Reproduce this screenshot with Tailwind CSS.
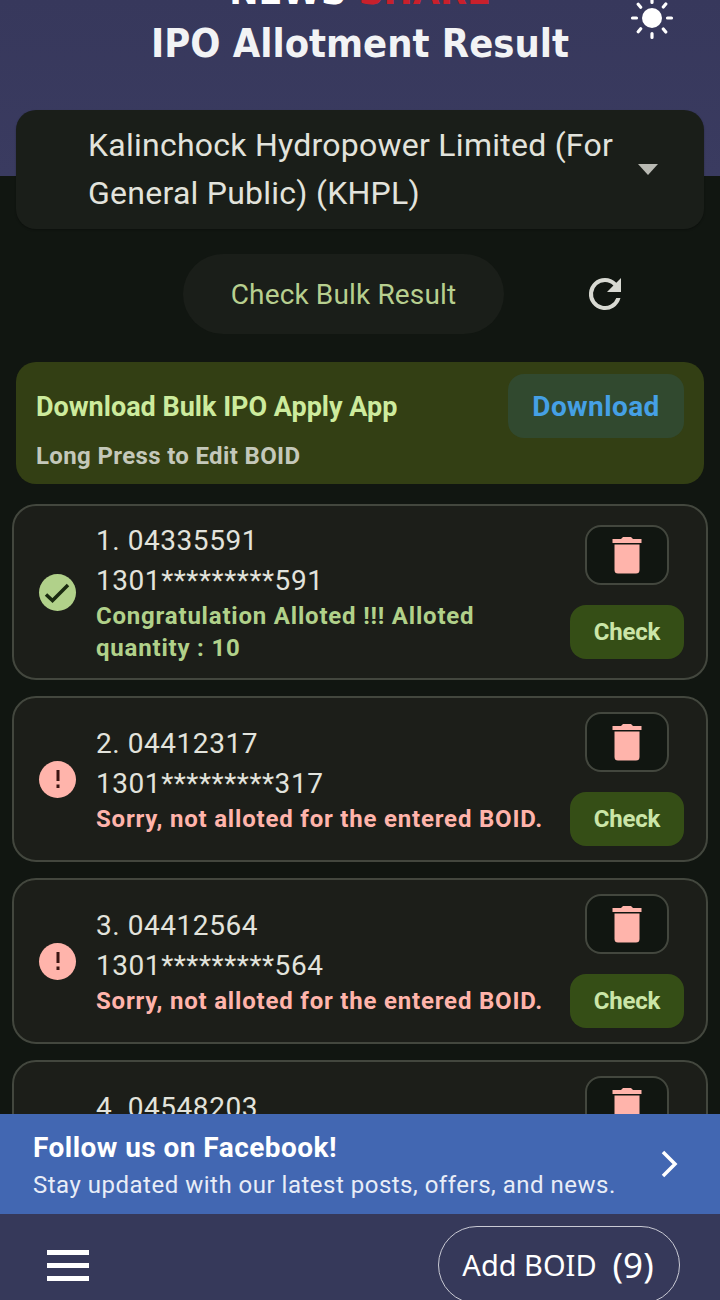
<!DOCTYPE html>
<html lang="en">

<head>
    <meta charset="UTF-8">
    <meta name="viewport" content="width=device-width, initial-scale=1.0">
    <title>IPO Allotment Result</title>
    <script src="https://cdn.jsdelivr.net/npm/@tailwindcss/browser@4"></script>
</head>

<body class="bg-[#111611]">
    <div class="relative w-[720px] h-[1300px] overflow-hidden flex flex-col bg-[#111611] font-['Roboto',sans-serif] text-[#e2e3dc]">

        <!-- scrolling part -->
        <div class="h-[1114px] overflow-hidden shrink-0">
            <div class="relative h-[176px] bg-gradient-to-b from-[#37385c] to-[#3a3b60]">
                <div class="h-[6px] overflow-hidden flex justify-center">
                    <div class="-mt-[20px] h-[25px] leading-[25px] text-[35px] font-bold font-['DejaVu_Sans',sans-serif] whitespace-nowrap"><span class="text-white">NEWS</span> <span class="text-[#c8202c]">SHARE</span></div>
                </div>
                <div class="mt-[12px] text-center text-[39.5px] leading-[50px] font-bold text-[#f2f3f5] font-['DejaVu_Sans_Condensed','DejaVu_Sans',sans-serif] [font-stretch:condensed]">IPO Allotment Result</div>
                <!-- sun -->
                <svg class="absolute left-[628px] top-[-6px]" width="48" height="48" viewBox="0 0 48 48" fill="none">
                    <circle cx="24" cy="24" r="10" fill="#fff"/>
                    <g stroke="#fff" stroke-width="3.2" stroke-linecap="round">
                        <path d="M24 4.5v4M24 39.500v4M4.500 24h4M39.500 24h4M10.200 10.200l2.500 3M35.300 35l2.500 3M10.200 37.800l2.500-3M35.300 13l2.500-3"/>
                    </g>
                </svg>
            </div>

            <div class="px-4 -mt-[66px] relative">
                <div class="h-[119px] rounded-[20px] bg-[#1a1e19] shadow-[0_1px_2px_rgba(0,0,0,0.3)] flex items-center pl-[72px] pr-[46px]">
                    <div class="flex-1 pb-[2px] text-[32px] leading-[48px] text-[#e2e3dc] tracking-[0.25px]">Kalinchock Hydropower Limited (For General Public) (KHPL)</div>
                    <div class="w-0 h-0 ml-2 border-l-[10px] border-r-[10px] border-t-[11px] border-l-transparent border-r-transparent border-t-[#b9bab3]"></div>
                </div>
            </div>

            <div class="flex mt-[25px] pl-[183px] items-center">
                <div class="w-[321px] h-[80px] pt-[2px] rounded-full bg-[#1a1e19] flex items-center justify-center text-[28px] text-[#b7cf8f] tracking-[0.15px]">Check Bulk Result</div>
                <svg class="ml-[77px]" width="48" height="48" viewBox="0 0 24 24" fill="#d8d9d2">
                    <path d="M17.650 6.350A7.960 7.960 0 0 0 12 4a8 8 0 1 0 7.730 10h-2.080A6 6 0 1 1 12 6c1.660 0 3.140.69 4.220 1.780L13 11h7V4z"/>
                </svg>
            </div>

            <div class="mx-4 mt-[28px] h-[122px] rounded-[20px] bg-[#333f14] flex pl-[20px] pr-[20px]">
                <div class="flex-1">
                    <div class="mt-[27px] text-[27px] leading-[36px] font-bold text-[#cdeb9d]">Download Bulk IPO Apply App</div>
                    <div class="mt-[13px] text-[24px] leading-[36px] font-bold text-[#c4c8ba] tracking-[0.35px]">Long Press to Edit BOID</div>
                </div>
                <div class="mt-[12px] w-[176px] h-[64px] pt-[1px] rounded-[16px] bg-[#31492f] flex items-center justify-center text-[28px] font-bold text-[#45a0e5] tracking-[0.4px]">Download</div>
            </div>

            <div class="mt-[20px] mx-3 flex flex-col gap-4">
                <!-- 1 -->
                <div class="h-[176px] rounded-[24px] border-2 border-[#43473e] bg-[#1c1e19] flex items-center pl-[25px] pr-[22px]">
                    <div class="w-[37px] h-[37px] rounded-full bg-[#b1d18a] shrink-0">
                        <svg width="37" height="37" viewBox="0 0 37 37" fill="none" stroke="#1a2a10" stroke-width="3.500"><path d="M7 20.500l6.500 6L29 11"/></svg>
                    </div>
                    <div class="flex-1 ml-[20px] w-0 pt-[1px]">
                        <div class="text-[28px] leading-[40px] tracking-[0.55px]">1. 04335591</div>
                        <div class="text-[28px] leading-[40px] tracking-[0.55px]">1301*********591</div>
                        <div class="-mt-[1px] text-[24px] leading-[32px] font-bold text-[#b1d18a] tracking-[0.8px] w-[420px]">Congratulation Alloted !!! Alloted quantity : 10</div>
                    </div>
                    <div class="flex flex-col items-center gap-[20px] w-[114px] shrink-0">
                        <div class="w-[84px] h-[60px] rounded-[16px] border-2 border-[#43473e] bg-[#111611] flex items-center justify-center">
                            <svg width="30" height="38" viewBox="0 0 30 38" fill="#ffb4ab"><path d="M0.500 7V3H9l2-2h8l2 2h8.500v4zM2.500 8.500h25V34a3.500 3.500 0 0 1-3.500 3.500H6A3.500 3.500 0 0 1 2.500 34z"/></svg>
                        </div>
                        <div class="w-[114px] h-[54px] rounded-[16px] bg-[#354e16] flex items-center justify-center text-[24px] font-bold text-[#cbe5a8] tracking-[-0.2px]">Check</div>
                    </div>
                </div>
                <!-- 2 -->
                <div class="h-[166px] rounded-[24px] border-2 border-[#43473e] bg-[#1c1e19] flex items-center pl-[25px] pr-[22px]">
                    <div class="w-[37px] h-[37px] rounded-full bg-[#ffb4ab] flex items-center justify-center shrink-0">
                        <svg width="8" height="24" viewBox="0 0 8 24" fill="#3a1512"><path d="M2.500 3h3v11h-3zM2.500 17.500h3v3.500h-3z"/></svg>
                    </div>
                    <div class="flex-1 ml-[20px] w-0 pt-[1px]">
                        <div class="text-[28px] leading-[40px] tracking-[0.55px]">2. 04412317</div>
                        <div class="text-[28px] leading-[40px] tracking-[0.55px]">1301*********317</div>
                        <div class="-mt-[1px] text-[24px] leading-[32px] font-bold text-[#ffb4ab] tracking-[0.8px] whitespace-nowrap">Sorry, not alloted for the entered BOID.</div>
                    </div>
                    <div class="flex flex-col items-center gap-[20px] w-[114px] shrink-0">
                        <div class="w-[84px] h-[60px] rounded-[16px] border-2 border-[#43473e] bg-[#111611] flex items-center justify-center">
                            <svg width="30" height="38" viewBox="0 0 30 38" fill="#ffb4ab"><path d="M0.500 7V3H9l2-2h8l2 2h8.500v4zM2.500 8.500h25V34a3.500 3.500 0 0 1-3.500 3.500H6A3.500 3.500 0 0 1 2.500 34z"/></svg>
                        </div>
                        <div class="w-[114px] h-[54px] rounded-[16px] bg-[#354e16] flex items-center justify-center text-[24px] font-bold text-[#cbe5a8] tracking-[-0.2px]">Check</div>
                    </div>
                </div>
                <!-- 3 -->
                <div class="h-[166px] rounded-[24px] border-2 border-[#43473e] bg-[#1c1e19] flex items-center pl-[25px] pr-[22px]">
                    <div class="w-[37px] h-[37px] rounded-full bg-[#ffb4ab] flex items-center justify-center shrink-0">
                        <svg width="8" height="24" viewBox="0 0 8 24" fill="#3a1512"><path d="M2.500 3h3v11h-3zM2.500 17.500h3v3.500h-3z"/></svg>
                    </div>
                    <div class="flex-1 ml-[20px] w-0 pt-[1px]">
                        <div class="text-[28px] leading-[40px] tracking-[0.55px]">3. 04412564</div>
                        <div class="text-[28px] leading-[40px] tracking-[0.55px]">1301*********564</div>
                        <div class="-mt-[1px] text-[24px] leading-[32px] font-bold text-[#ffb4ab] tracking-[0.8px] whitespace-nowrap">Sorry, not alloted for the entered BOID.</div>
                    </div>
                    <div class="flex flex-col items-center gap-[20px] w-[114px] shrink-0">
                        <div class="w-[84px] h-[60px] rounded-[16px] border-2 border-[#43473e] bg-[#111611] flex items-center justify-center">
                            <svg width="30" height="38" viewBox="0 0 30 38" fill="#ffb4ab"><path d="M0.500 7V3H9l2-2h8l2 2h8.500v4zM2.500 8.500h25V34a3.500 3.500 0 0 1-3.500 3.500H6A3.500 3.500 0 0 1 2.500 34z"/></svg>
                        </div>
                        <div class="w-[114px] h-[54px] rounded-[16px] bg-[#354e16] flex items-center justify-center text-[24px] font-bold text-[#cbe5a8] tracking-[-0.2px]">Check</div>
                    </div>
                </div>
                <!-- 4, cut off by the banner -->
                <div class="h-[166px] rounded-[24px] border-2 border-[#43473e] bg-[#1c1e19] flex items-center pl-[25px] pr-[22px]">
                    <div class="w-[37px] shrink-0"></div>
                    <div class="flex-1 ml-[20px] w-0 pt-[1px]">
                        <div class="text-[28px] leading-[40px] tracking-[0.55px]">4. 04548203</div>
                        <div class="text-[28px] leading-[40px] tracking-[0.55px]">1301*********203</div>
                        <div class="-mt-[1px] text-[24px] leading-[32px]">&nbsp;</div>
                    </div>
                    <div class="flex flex-col items-center gap-[20px] w-[114px] shrink-0">
                        <div class="w-[84px] h-[60px] rounded-[16px] border-2 border-[#43473e] bg-[#111611] flex items-center justify-center">
                            <svg width="30" height="38" viewBox="0 0 30 38" fill="#ffb4ab"><path d="M0.500 7V3H9l2-2h8l2 2h8.500v4zM2.500 8.500h25V34a3.500 3.500 0 0 1-3.500 3.500H6A3.500 3.500 0 0 1 2.500 34z"/></svg>
                        </div>
                        <div class="w-[114px] h-[54px]"></div>
                    </div>
                </div>
            </div>
        </div>

        <!-- facebook banner -->
        <div class="h-[100px] shrink-0 bg-[#4267b2] flex items-center pl-[33px] pr-[38px] text-white">
            <div class="flex-1 pt-[3px]">
                <div class="text-[28px] leading-[38px] font-bold tracking-[0.45px]">Follow us on Facebook!</div>
                <div class="text-[24px] leading-[36px] text-[#e8edf7] tracking-[0.5px]">Stay updated with our latest posts, offers, and news.</div>
            </div>
            <svg class="-mr-[1px]" width="24" height="34" viewBox="0 0 24 34" fill="none" stroke="#fff" stroke-width="3.500"><path d="M4 5l12 12L4 29"/></svg>
        </div>

        <!-- bottom bar -->
        <div class="flex-1 bg-[#36395a] flex items-start pl-[47px]">
            <div class="mt-[36px] w-[42px] flex flex-col gap-[8px]">
                <div class="h-[5px] bg-white"></div>
                <div class="h-[5px] bg-white"></div>
                <div class="h-[5px] bg-white"></div>
            </div>
            <div class="ml-[349px] mt-[12px] w-[242px] h-[78px] rounded-full border border-[#c9cad4] flex items-center justify-center text-[29px] text-white font-['Noto_Sans',sans-serif]">Add BOID<span class="ml-[16px] pr-[2px] text-[35px]">(9)</span></div>
        </div>
    </div>
</body>

</html>
